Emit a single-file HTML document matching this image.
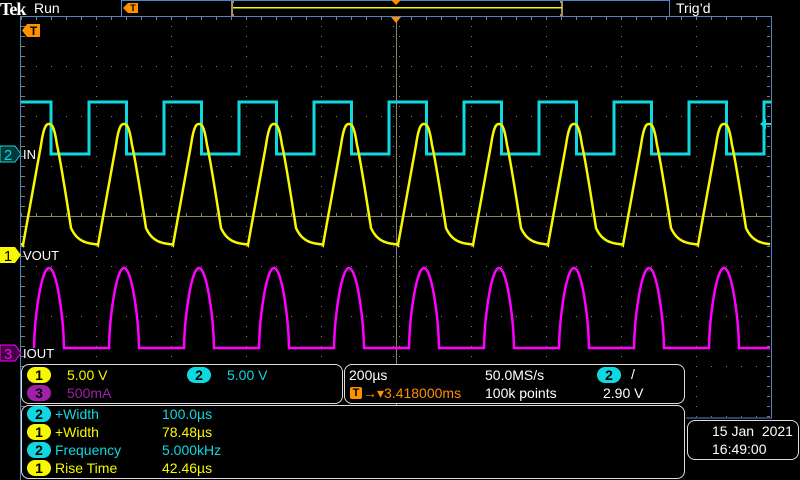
<!DOCTYPE html>
<html><head><meta charset="utf-8"><style>
body{margin:0;background:#000;width:800px;height:480px;overflow:hidden;position:relative;font-family:"Liberation Sans",sans-serif;color:#fff}
.a{position:absolute;white-space:nowrap}
.pill{position:absolute;width:24px;height:16px;border-radius:8px;color:#000;font-size:14px;line-height:16px;text-align:center;font-weight:bold}
.y{background:#f8f800}.c{background:#10d8e0}.m{background:#a020a8}
.box{position:absolute;border:1px solid #ddd;border-radius:8px;background:#000}
.t{font-size:14px;line-height:16px}
</style></head><body>
<svg id="s" class="a" style="left:0;top:0" width="800" height="480"></svg>
<div class="a" style="left:0;top:-1px;font-family:'Liberation Serif',serif;font-weight:bold;font-size:18px;letter-spacing:-1px">Tek</div>
<div class="a" style="left:34px;top:0;font-size:14px">Run</div>
<div class="a" style="left:676px;top:0;font-size:14px">Trig’d</div>
<div class="a" style="left:23px;top:147px;font-size:13px">IN</div>
<div class="a" style="left:23px;top:248px;font-size:13px">VOUT</div>
<div class="a" style="left:23px;top:346px;font-size:13px">IOUT</div>

<div class="box" style="left:21px;top:364px;width:320px;height:38px"></div>
<div class="box" style="left:344px;top:364px;width:339px;height:38px"></div>
<div class="box" style="left:21px;top:405px;width:662px;height:72px"></div>
<div class="box" style="left:687px;top:420px;width:110px;height:38px"></div>

<div class="pill y" style="left:27px;top:367px">1</div>
<div class="a t" style="left:67px;top:367px;color:#f8f800">5.00 V</div>
<div class="pill c" style="left:187px;top:367px">2</div>
<div class="a t" style="left:227px;top:367px;color:#10d8e0">5.00 V</div>
<div class="pill m" style="left:27px;top:385px">3</div>
<div class="a t" style="left:67px;top:385px;color:#a020a8">500mA</div>

<div class="a t" style="left:349px;top:367px">200µs</div>
<div class="a t" style="left:485px;top:367px">50.0MS/s</div>
<div class="pill c" style="left:597px;top:367px">2</div>
<div class="a t" style="left:631px;top:366px">/</div>
<div class="a" style="left:350px;top:387px;width:12px;height:12px;background:#ff9000;border-radius:2px;color:#000;font-size:11px;line-height:12px;text-align:center;font-weight:bold">T</div>
<div class="a t" style="left:363px;top:385px;color:#ff9000">→▾3.418000ms</div>
<div class="a t" style="left:485px;top:385px">100k points</div>
<div class="a t" style="left:603px;top:385px">2.90 V</div>

<div class="pill c" style="left:27px;top:406px">2</div>
<div class="a t" style="left:55px;top:406px;color:#10d8e0">+Width</div>
<div class="a t" style="left:162px;top:406px;color:#10d8e0">100.0µs</div>
<div class="pill y" style="left:27px;top:424px">1</div>
<div class="a t" style="left:55px;top:424px;color:#f8f800">+Width</div>
<div class="a t" style="left:162px;top:424px;color:#f8f800">78.48µs</div>
<div class="pill c" style="left:27px;top:442px">2</div>
<div class="a t" style="left:55px;top:442px;color:#10d8e0">Frequency</div>
<div class="a t" style="left:162px;top:442px;color:#10d8e0">5.000kHz</div>
<div class="pill y" style="left:27px;top:460px">1</div>
<div class="a t" style="left:55px;top:460px;color:#f8f800">Rise Time</div>
<div class="a t" style="left:162px;top:460px;color:#f8f800">42.46µs</div>

<div class="a t" style="left:712px;top:423px">15 Jan &nbsp;2021</div>
<div class="a t" style="left:712px;top:441px">16:49:00</div>
<script>
var s=document.getElementById('s'),h='';
function r(x,y,w,hh,c){h+='<rect x="'+x+'" y="'+y+'" width="'+w+'" height="'+hh+'" fill="'+c+'"/>';}
var g='#8a8068';
for(var i=0;i<=10;i++){var x=21+75*i;for(var y=16;y<=416;y+=10)r(x,y,1,1,g);}
for(var j=0;j<=8;j++){var y=16+50*j;for(var x=21;x<=771;x+=15)r(x,y,1,1,g);}
for(var x=21;x<=771;x+=15){r(x,17,1,3,g);r(x,213,1,3,g);}
for(var y=16;y<=416;y+=10){r(393,y,1,1,g);r(399,y,1,1,g);r(767,y,3,1,g);r(22,y,3,1,g);}
r(21,216,750,1,'#8a8068');r(396,16,1,400,'#8a8068');
h+='<path d="M20.5 480 V16.5 H771.5 V418 H686" stroke="#4f86c6" fill="none"/>';
h+='<rect x="121.5" y="0.5" width="548" height="16" stroke="#4f86c6" fill="none"/>';
h+='<path d="M234 2H232V15H234M560 2H562V15H560" stroke="#a09070" stroke-width="2" fill="none"/>';
r(233,7,329,1.5,'#f8f800');
h+='<path d="M391 17H401L396 23Z" fill="#ff9000"/><path d="M391 0H401L396 5Z" fill="#ff9000"/>';
function T(x,y,w){h+='<path d="M'+x+' '+(y+w/2)+'L'+(x+5)+' '+y+'H'+(x+w+5)+'V'+(y+w)+'H'+(x+5)+'Z" fill="#ff9000"/><text x="'+(x+5+w/2)+'" y="'+(y+w-2)+'" font-size="'+(w-1)+'" font-weight="bold" text-anchor="middle" fill="#000" font-family="Liberation Sans">T</text>';}
T(22,24,13);T(123,3,10);
function M(y,c,n,tc,st){h+='<path d="M0 '+(y-8)+'H15L21 '+y+'L15 '+(y+8)+'H0Z" fill="'+c+'" '+(st?'stroke="'+st+'"':'')+'/><text x="8" y="'+(y+6)+'" font-size="15" text-anchor="middle" fill="'+tc+'" font-family="Liberation Sans">'+n+'</text>';}
M(154,'#003838','2','#10d8e0','#10d8e0');M(255,'#f8f800','1','#000');M(353,'#400040','3','#ff00ff','#ff00ff');
h+='<path d="M760 124L766 119V129Z" fill="#10d8e0"/><path d="M764 124H771" stroke="#10d8e0" stroke-width="2"/>';
var p='M21 102';
p+='H51V154';for(var k=0;k<10;k++){var re=89+75*k;p+='H'+re+'V102';var fe=re+37.5;if(fe<771)p+='H'+fe+'V154';else p+='H771';}
h+='<path d="'+p+'" stroke="#10d8e0" stroke-width="3" fill="none"/>';
function Y(x){var q=((x-23)%75+75)%75;
 if(q<18)return 245-100*(q/18);
 if(q<34)return 124+21*Math.pow(Math.abs(q-26)/8,2.6);
 if(q<48)return 145+83*Math.pow((q-34)/14,1.1);
 return 245-17*Math.exp(-(q-48)/8);}
p='';for(x=21;x<=770;x+=0.5)p+=(p?'L':'M')+x+' '+Y(x).toFixed(1);
h+='<path d="'+p+'" stroke="#f8f800" stroke-width="2.5" fill="none"/>';
function Mg(x){var q=((x-34)%75+75)%75;if(q<30)return 348-80*Math.pow(Math.sin(Math.PI*q/30),0.6);return 348;}
p='';for(x=34;x<=770;x+=0.5)p+=(p?'L':'M')+x+' '+Mg(x).toFixed(1);
h+='<path d="'+p+'" stroke="#ff00ff" stroke-width="2.5" fill="none"/>';
s.innerHTML=h;
</script>
</body></html>
